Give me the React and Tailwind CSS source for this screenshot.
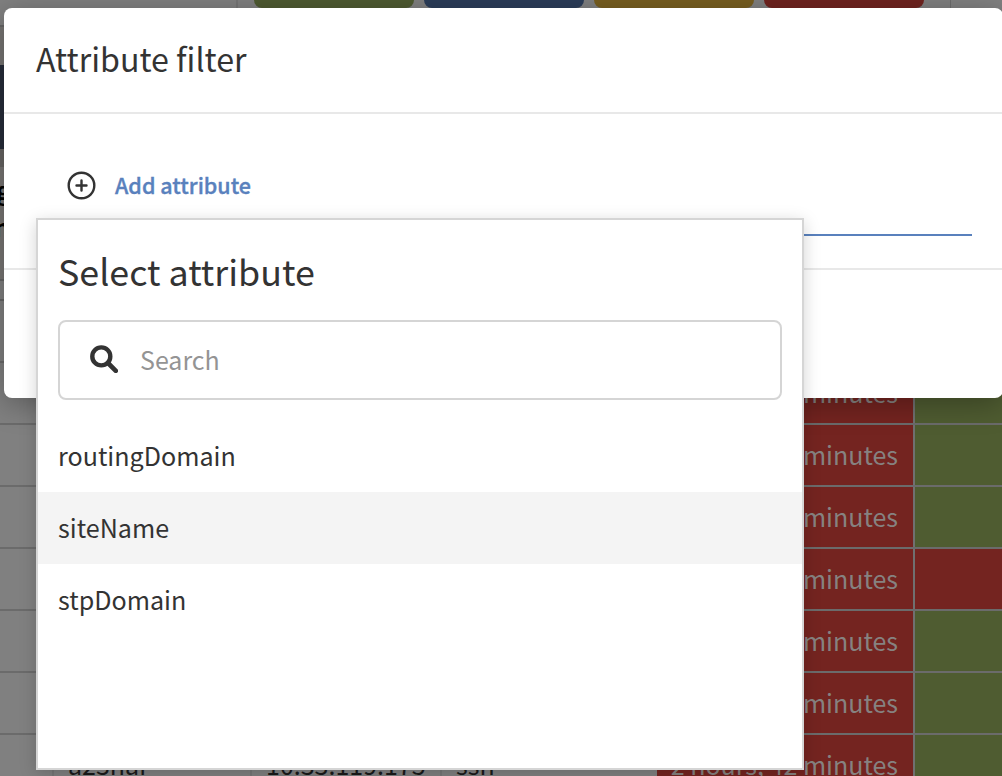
import React from "react";

const rows = [
  { ok: true },
  { ok: true },
  { ok: true },
  { ok: true },
  { ok: false },
  { ok: true },
  { ok: true },
  { ok: true, host: "a23nar", ip: "10.33.119.175", protocol: "ssh" },
];

const attributes = [
  { name: "routingDomain", active: false },
  { name: "siteName", active: true },
  { name: "stpDomain", active: false },
];

function DeviceTable() {
  return (
    <div className="flex h-full w-full flex-col overflow-hidden bg-[#808080]">
      <div className="flex h-[27px] shrink-0 border-b-2 border-[#666]">
        <div className="w-[238px] shrink-0 border-r-2 border-[#757575]" />
        <div className="flex h-2 w-[712px] shrink-0 gap-2.5 pl-4">
          <div className="w-40 rounded-b-lg bg-[#4e5a31]" />
          <div className="w-40 rounded-b-lg bg-[#2b3d59]" />
          <div className="w-40 rounded-b-lg bg-[#775e20]" />
          <div className="w-40 rounded-b-lg bg-[#6f231f]" />
        </div>
        <div className="border-l border-[#6c6c6c]" />
      </div>
      <div className="h-[38px] shrink-0 bg-[#777573]" />
      <div className="h-[84px] shrink-0 bg-[#272d3a]" />
      <div className="h-[18px] shrink-0 bg-[#676563]" />
      <div className="flex h-[114px] shrink-0 flex-col items-start border-b-2 border-[#666] bg-[#787674] pt-1 text-[25px] leading-[37px] font-bold text-black">
        <span className="-ml-1">g</span>
        <span className="-ml-[6px]">n</span>
      </div>
      <div className="h-5 shrink-0 border-b-2 border-[#666]" />
      {rows.map((row, i) => (
        <div
          key={i}
          className="flex h-[62px] shrink-0 border-b-2 border-[#6b6b6b] text-[25px] leading-[59px] whitespace-nowrap text-[#1a1a1a]"
        >
          <div className="w-[54px] shrink-0 border-r-2 border-[#777]" />
          <div className="w-[198px] shrink-0 border-r-2 border-[#777] pl-3.5">{row.host}</div>
          <div className="w-[190px] shrink-0 border-r-2 border-[#777] pl-3.5">{row.ip}</div>
          <div className="w-[215px] shrink-0 pl-3.5">{row.protocol}</div>
          <div className="w-[258px] shrink-0 border-r-2 border-[#707070] bg-[#742420] pr-[15px] text-right text-[#868280]">
            {row.host ? "2 hours, 42 minutes" : "minutes"}
          </div>
          <div className={row.ok ? "flex-1 bg-[#4f5c31]" : "flex-1 bg-[#742420]"} />
        </div>
      ))}
    </div>
  );
}

function AddAttributeButton() {
  return (
    <button className="flex items-center gap-[18px]">
      <svg className="h-[30px] w-[30px]" viewBox="0 0 30 30" fill="none" stroke="#333" strokeWidth="2.4" strokeLinecap="round">
        <circle cx="15.5" cy="15.5" r="12.8" />
        <path d="M15.5 10.5v10M10.5 15.5h10" />
      </svg>
      <span className="pl-px text-[21.5px] leading-8 font-medium text-[#5981bd] [-webkit-text-stroke:0.35px_#5981bd]">
        Add attribute
      </span>
    </button>
  );
}

function FilterDialog() {
  return (
    <div className="flex h-[390px] w-[999px] flex-col rounded-lg bg-white shadow-[0_6px_30px_rgba(0,0,0,0.3)]">
      <div className="flex h-[106px] shrink-0 items-center border-b-2 border-[#e8e8e8] pb-1 pl-8">
        <h1 className="text-[32.2px] leading-10 text-[#333]">Attribute filter</h1>
      </div>
      <div className="h-[156px] shrink-0 border-b-2 border-[#e8e8e8] pr-[31px] pl-8">
        <div className="h-[122px] border-b-2 border-[#5981bd] pt-[55px] pl-[30px]">
          <AddAttributeButton />
        </div>
      </div>
    </div>
  );
}

function AttributeMenu() {
  return (
    <div className="flex h-[552px] w-[768px] flex-col border-2 border-[#d5d5d5] bg-white shadow-[0_4px_16px_rgba(0,0,0,0.18)]">
      <h2 className="mt-[25px] pl-5 text-[35.8px] leading-[50px] text-[#333]">Select attribute</h2>
      <div className="mx-5 mt-[25px] flex h-20 shrink-0 items-center rounded-lg border-2 border-[#d5d5d5] pl-[30px]">
        <svg className="mb-0.5 h-7 w-7" viewBox="0 0 28 28" fill="none" stroke="#333">
          <circle cx="11.3" cy="11.4" r="9" strokeWidth="4.4" />
          <path d="M18 18l7.8 7.8" strokeWidth="4.6" strokeLinecap="round" />
        </svg>
        <span className="mb-0.5 ml-[22px] text-[25px] leading-9 text-[#949494]">Search</span>
      </div>
      <ul className="mt-5">
        {attributes.map((a) => (
          <li
            key={a.name}
            className={
              a.active
                ? "h-[72px] bg-[#f4f4f4] pl-5 text-[25.1px] leading-[71px] text-[#333]"
                : "h-[72px] pl-5 text-[25.1px] leading-[71px] text-[#333]"
            }
          >
            {a.name}
          </li>
        ))}
      </ul>
    </div>
  );
}

export default function App() {
  return (
    <div className="relative h-[776px] w-[1002px] overflow-hidden font-['Noto_Sans_CJK_SC','Noto_Sans',sans-serif]">
      <DeviceTable />
      <div className="absolute top-2 left-1">
        <FilterDialog />
      </div>
      <div className="absolute top-[218px] left-9">
        <AttributeMenu />
      </div>
    </div>
  );
}
